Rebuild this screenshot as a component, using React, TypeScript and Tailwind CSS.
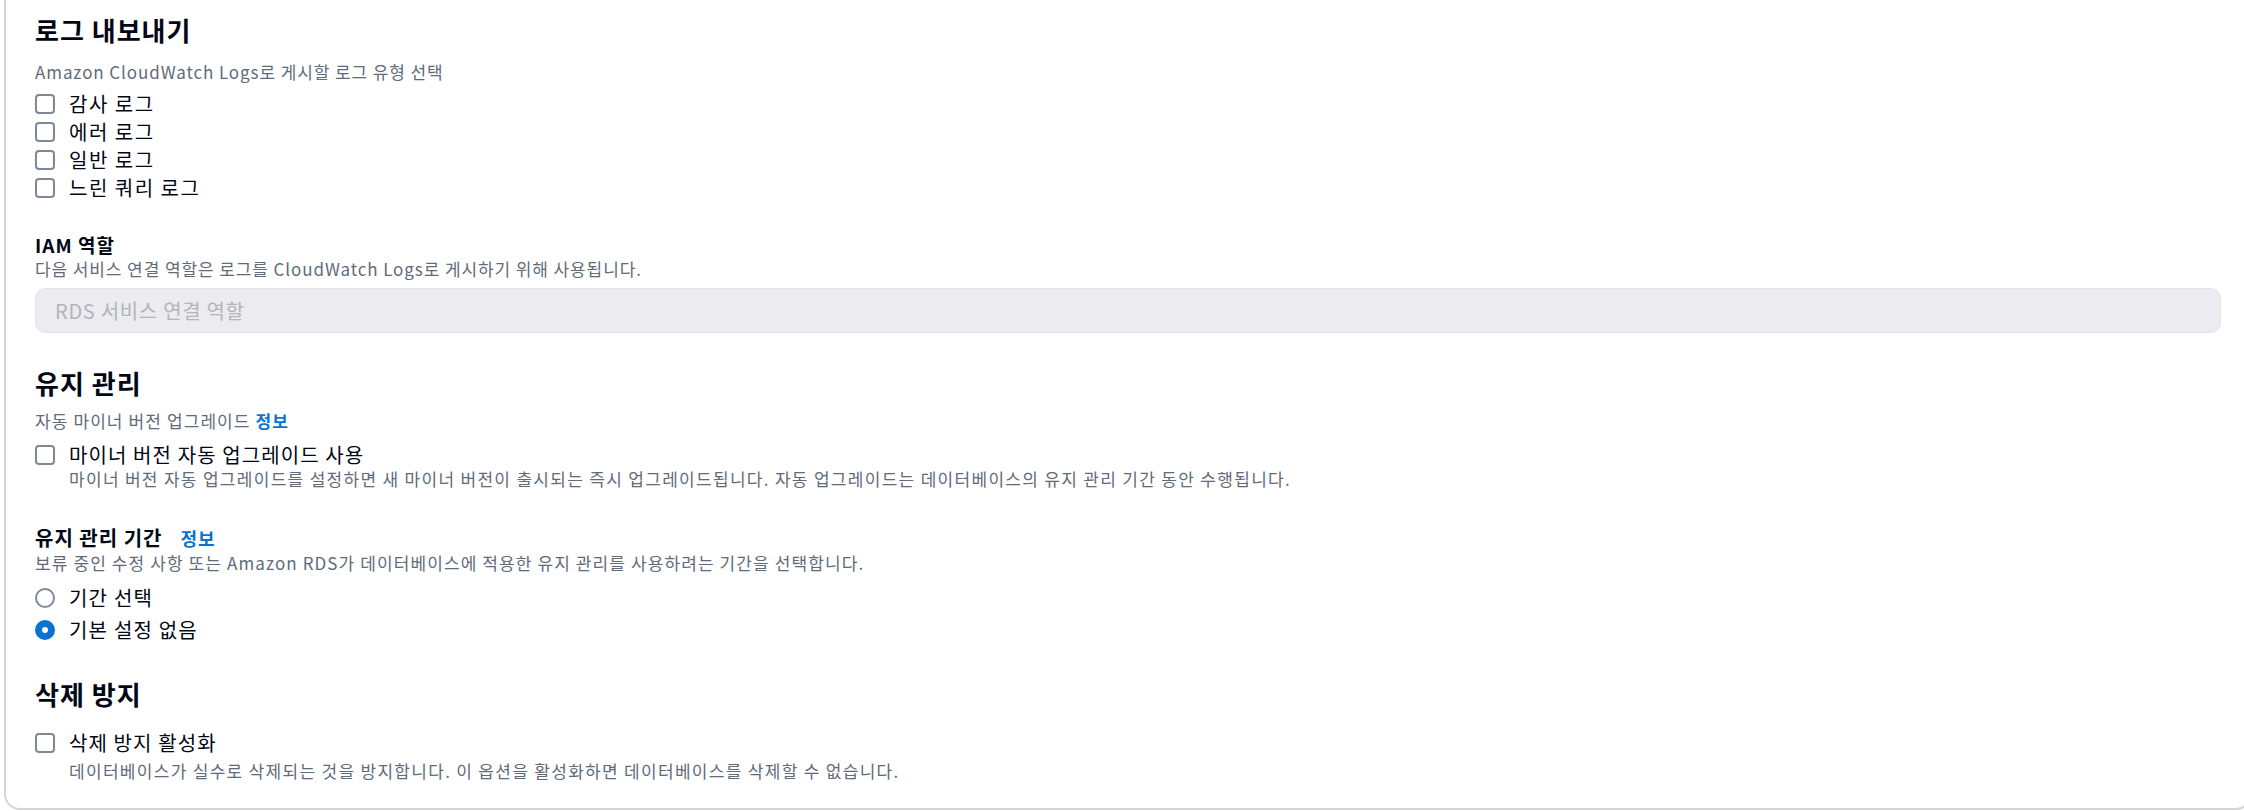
import React from "react";

const font = { fontFamily: '"Noto Sans CJK KR", "Open Sans", sans-serif' };

function CheckBox() {
  return (
    <span className="block h-[20px] w-[20px] shrink-0 rounded-[4px] border-2 border-[#7d8998] bg-white" />
  );
}

function Radio({ checked }: { checked?: boolean }) {
  return checked ? (
    <span className="block h-[20px] w-[20px] shrink-0 rounded-full border-[7px] border-[#0972d3] bg-white" />
  ) : (
    <span className="block h-[20px] w-[20px] shrink-0 rounded-full border-2 border-[#7d8998] bg-white" />
  );
}

function Info({ className = "" }: { className?: string }) {
  return <span className={`font-bold text-[#0972d3] ${className}`}>정보</span>;
}

export default function App() {
  const logTypes = ["감사 로그", "에러 로그", "일반 로그", "느린 쿼리 로그"];

  return (
    <div className="h-[811px] w-full overflow-hidden bg-white text-[#000716]" style={font}>
      <div className="ml-[4px] w-[2248px] rounded-b-[16px] border-x-2 border-b-2 border-[#d1d5db] px-[29px] pt-[14px] pb-[26px]">
        {/* 로그 내보내기 */}
        <h2 className="text-[26px] font-bold leading-[32px] tracking-[1px]">로그 내보내기</h2>
        <p className="mt-[15px] text-[17px] leading-[22px] tracking-[0.9px] text-[#5f6b7a]">
          Amazon CloudWatch Logs로 게시할 로그 유형 선택
        </p>
        <div className="mt-[7px] flex flex-col">
          {logTypes.map((label) => (
            <label key={label} className="flex h-[28px] items-center gap-[14px]">
              <CheckBox />
              <span className="text-[20px] leading-[28px] tracking-[1.5px]">{label}</span>
            </label>
          ))}
        </div>

        {/* IAM 역할 */}
        <div className="mt-[31px] text-[19px] font-bold leading-[24px] tracking-[1px]">IAM 역할</div>
        <p className="mt-[1px] text-[17px] leading-[22px] tracking-[0.9px] text-[#5f6b7a]">
          다음 서비스 연결 역할은 로그를 CloudWatch Logs로 게시하기 위해 사용됩니다.
        </p>
        <div className="mt-[8px] flex h-[45px] items-center rounded-[10px] border border-[#e4e4ea] bg-[#ebebf0] px-[19px] text-[20px] tracking-[0.7px] text-[#b4b4bb]">
          RDS 서비스 연결 역할
        </div>

        {/* 유지 관리 */}
        <h2 className="mt-[34px] text-[26px] font-bold leading-[32px] tracking-[1px]">유지 관리</h2>
        <p className="mt-[11px] text-[17px] leading-[22px] tracking-[1.1px] text-[#5f6b7a]">
          자동 마이너 버전 업그레이드 <Info />
        </p>
        <div className="mt-[10px] flex gap-[14px]">
          <div className="pt-[3px]">
            <CheckBox />
          </div>
          <div>
            <div className="text-[20px] leading-[26px] tracking-[1.1px]">마이너 버전 자동 업그레이드 사용</div>
            <div className="text-[17px] leading-[22px] tracking-[1.3px] text-[#5f6b7a]">
              마이너 버전 자동 업그레이드를 설정하면 새 마이너 버전이 출시되는 즉시 업그레이드됩니다. 자동 업그레이드는 데이터베이스의 유지 관리 기간 동안 수행됩니다.
            </div>
          </div>
        </div>

        <div className="mt-[36px] flex items-baseline text-[20px] font-bold leading-[24px] tracking-[1px]">
          <span>유지 관리 기간</span>
          <Info className="ml-[18px] text-[18px]" />
        </div>
        <p className="mt-[2px] text-[17px] leading-[22px] tracking-[1.1px] text-[#5f6b7a]">
          보류 중인 수정 사항 또는 Amazon RDS가 데이터베이스에 적용한 유지 관리를 사용하려는 기간을 선택합니다.
        </p>
        <div className="mt-[10px] flex flex-col gap-[4px]">
          <label className="flex h-[28px] items-center gap-[14px]">
            <Radio />
            <span className="text-[20px] leading-[28px] tracking-[1.2px]">기간 선택</span>
          </label>
          <label className="flex h-[28px] items-center gap-[14px]">
            <Radio checked />
            <span className="text-[20px] leading-[28px] tracking-[1.2px]">기본 설정 없음</span>
          </label>
        </div>

        {/* 삭제 방지 */}
        <h2 className="mt-[34px] text-[26px] font-bold leading-[32px] tracking-[1px]">삭제 방지</h2>
        <div className="mt-[20px] flex gap-[14px]">
          <div className="pt-[3px]">
            <CheckBox />
          </div>
          <div>
            <div className="text-[20px] leading-[26px] tracking-[1.1px]">삭제 방지 활성화</div>
            <div className="mt-[4px] text-[17px] leading-[22px] tracking-[1.3px] text-[#5f6b7a]">
              데이터베이스가 실수로 삭제되는 것을 방지합니다. 이 옵션을 활성화하면 데이터베이스를 삭제할 수 없습니다.
            </div>
          </div>
        </div>
      </div>
    </div>
  );
}
